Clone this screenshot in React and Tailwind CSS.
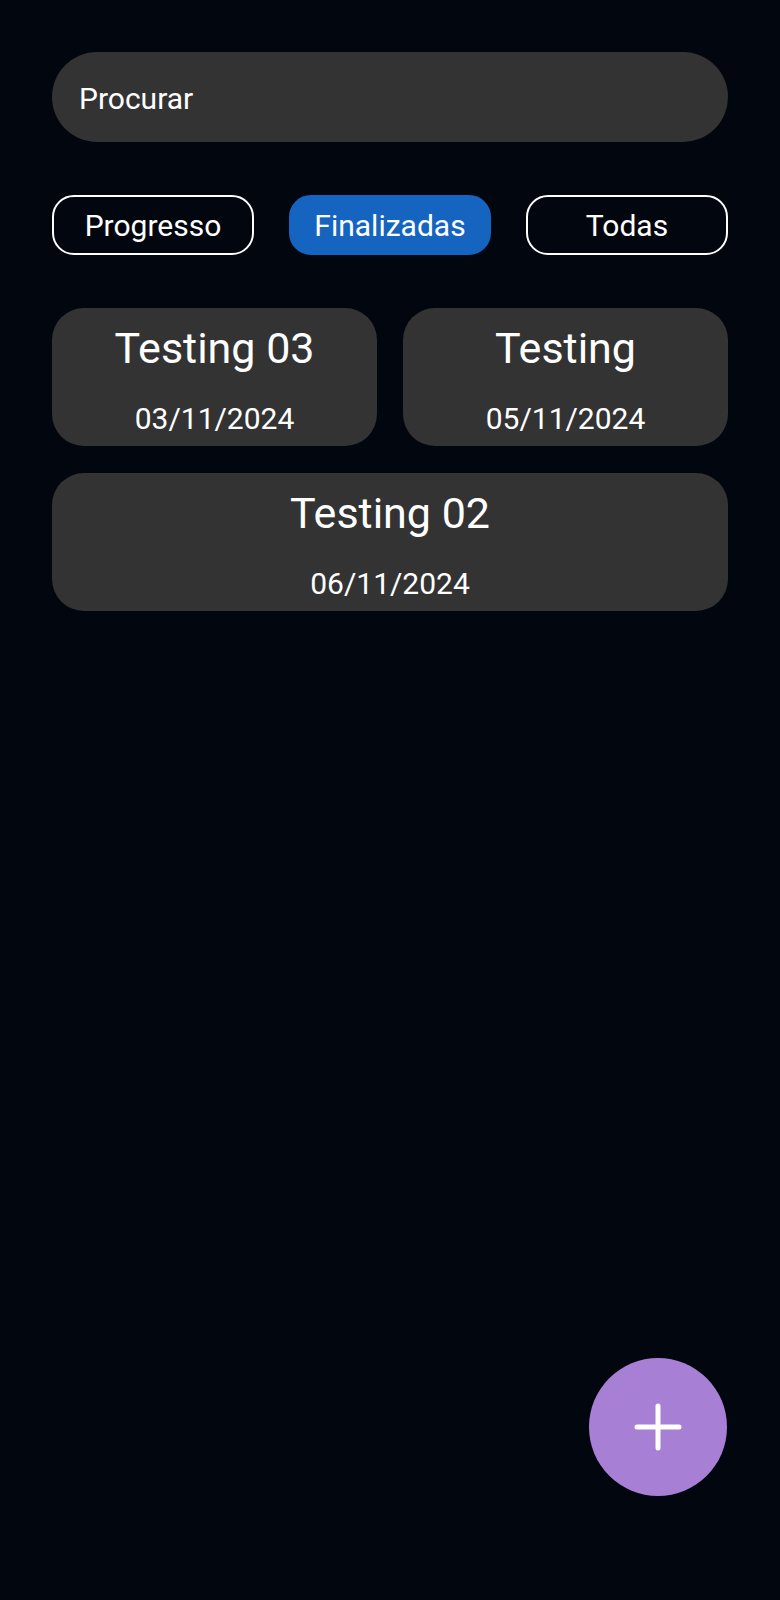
import React, { useState } from "react";

const tasks = [
  { title: "Testing 03", date: "03/11/2024" },
  { title: "Testing", date: "05/11/2024" },
  { title: "Testing 02", date: "06/11/2024", wide: true },
];

const filters = ["Progresso", "Finalizadas", "Todas"];

function TaskCard({ title, date, wide }) {
  return (
    <div
      className={
        "h-[138px] rounded-[32px] bg-[#333333] flex flex-col items-center pt-[15px] text-white " +
        (wide ? "col-span-2" : "")
      }
    >
      <span className="text-[43px] leading-[50px]">{title}</span>
      <span className="mt-[28px] text-[30px] leading-[35px]">{date}</span>
    </div>
  );
}

export default function App() {
  const [filter, setFilter] = useState("Finalizadas");

  return (
    <div
      className="relative min-h-[1600px] bg-[#02060f] px-[52px] pt-[52px]"
      style={{ fontFamily: "Roboto, 'Noto Sans', sans-serif" }}
    >
      <div className="h-[90px] rounded-full bg-[#333333] flex items-center px-[27px] pt-[3px]">
        <span className="text-[30px] text-white">Procurar</span>
      </div>

      <div className="mt-[53px] flex justify-between">
        {filters.map((f) => (
          <button
            key={f}
            onClick={() => setFilter(f)}
            className={
              "w-[202px] h-[60px] rounded-[22px] text-[30px] text-white flex items-center justify-center " +
              (filter === f
                ? "bg-[#1565c0] border-2 border-[#1565c0]"
                : "border-2 border-white")
            }
          >
            {f}
          </button>
        ))}
      </div>

      <div className="mt-[53px] grid grid-cols-2 gap-x-[26px] gap-y-[27px]">
        {tasks.map((t) => (
          <TaskCard key={t.title} {...t} />
        ))}
      </div>

      <button className="absolute right-[53px] bottom-[104px] w-[138px] h-[138px] rounded-full bg-[#a77fd4] flex items-center justify-center">
        <svg width="48" height="48" viewBox="0 0 48 48">
          <path
            d="M24 3v42M3 24h42"
            stroke="white"
            strokeWidth="5"
            strokeLinecap="round"
          />
        </svg>
      </button>
    </div>
  );
}
